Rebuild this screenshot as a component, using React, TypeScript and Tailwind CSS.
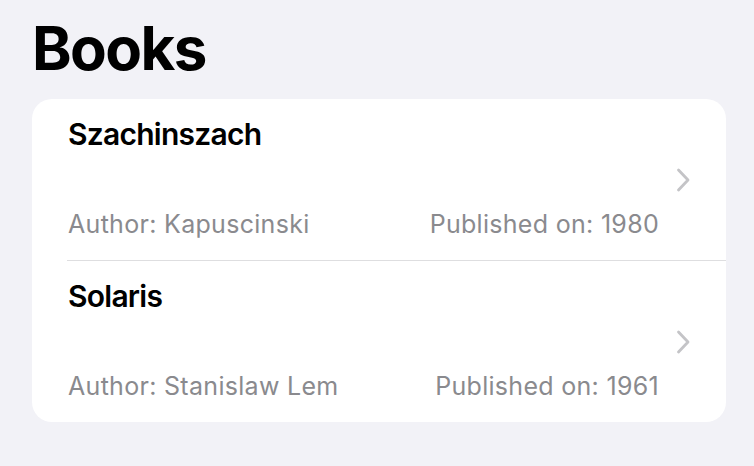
import React from "react";

const books = [
  { title: "Szachinszach", author: "Kapuscinski", year: "1980" },
  { title: "Solaris", author: "Stanislaw Lem", year: "1961" },
];

function Chevron() {
  return (
    <svg width="14" height="24" viewBox="0 0 14 24" fill="none" className="shrink-0">
      <path d="M2.5 2 L12 12 L2.5 22" stroke="#c4c4c7" strokeWidth="2.8" strokeLinecap="round" strokeLinejoin="round" />
    </svg>
  );
}

export default function App() {
  return (
    <div
      className="w-full h-[466px] bg-[#f2f2f7] overflow-hidden"
      style={{ fontFamily: "Inter, 'Noto Sans', sans-serif" }}
    >
      <h1 className="pl-[32px] pt-[12px] text-[60px] leading-[72px] font-bold text-black tracking-[-1.6px]">
        Books
      </h1>
      <div className="ml-[32px] mr-[28px] mt-[15px] bg-white rounded-[20px] overflow-hidden">
        {books.map((b, i) => (
          <div key={b.title} className="flex flex-col">
            {i > 0 && <div className="ml-[35px] h-px bg-[#dedee0]" />}
            <div className="h-[161px] flex items-center pl-[36px] pr-[36px]">
              <div className="flex-1 h-full flex flex-col justify-between pt-[17px] pb-[21px]">
                <div className="text-[30px] leading-[36px] font-semibold text-black tracking-[-0.75px]">
                  {b.title}
                </div>
                <div className="flex justify-between text-[25px] leading-[30px] text-[#8a8a8e] tracking-[0.3px]">
                  <span>Author: {b.author}</span>
                  <span>Published on: {b.year}</span>
                </div>
              </div>
              <div className="ml-[17px]">
                <Chevron />
              </div>
            </div>
          </div>
        ))}
      </div>
    </div>
  );
}
